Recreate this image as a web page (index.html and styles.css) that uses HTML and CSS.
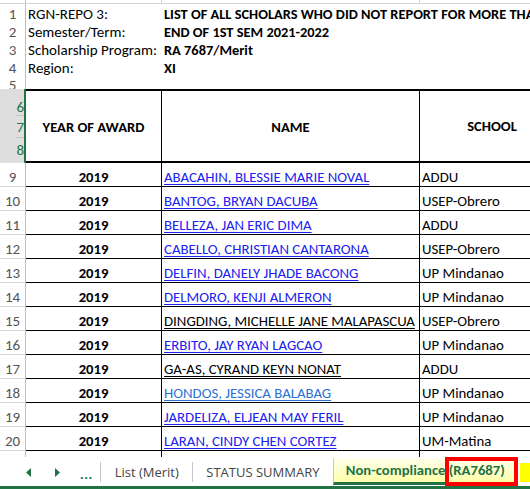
FILE: index.html
```html
<!DOCTYPE html>
<html>
<head>
<meta charset="utf-8">
<title>Non-compliance (RA7687)</title>
<link rel="stylesheet" href="styles.css">
</head>
<body>
<div class="app">
  <div class="sheet">
    <div class="row top">
      <div class="rh"></div><div class="c ca"></div><div class="c cb"></div><div class="c cc"></div>
    </div>
    <div class="row meta">
      <div class="rh">1</div><div class="c ca">RGN-REPO 3:</div><div class="c cb b over">LIST OF ALL SCHOLARS WHO DID NOT REPORT FOR MORE THAN ONE SEMESTER</div>
    </div>
    <div class="row meta">
      <div class="rh">2</div><div class="c ca">Semester/Term:</div><div class="c cb b over">END OF 1ST SEM 2021-2022</div>
    </div>
    <div class="row meta">
      <div class="rh">3</div><div class="c ca">Scholarship Program:</div><div class="c cb b over">RA 7687/Merit</div>
    </div>
    <div class="row meta">
      <div class="rh">4</div><div class="c ca">Region:</div><div class="c cb b over">XI</div>
    </div>
    <div class="row short">
      <div class="rh"><span class="clip">5</span></div><div class="c ca"></div><div class="c cb"></div><div class="c cc"></div>
    </div>
    <div class="row head">
      <div class="rh sel-group">
        <div class="rh-sel s6">6</div>
        <div class="rh-sel s7">7</div>
        <div class="rh-sel s8">8</div>
      </div>
      <div class="c ca hc">YEAR OF AWARD</div>
      <div class="c cb hc">NAME</div>
      <div class="c cc hc">SCHOOL</div>
    </div>
    <div class="row data"><div class="rh">9</div><div class="c ca yr">2019</div><div class="c cb"><span class="lnk">ABACAHIN, BLESSIE MARIE NOVAL</span></div><div class="c cc">ADDU</div></div>
    <div class="row data"><div class="rh">10</div><div class="c ca yr">2019</div><div class="c cb"><span class="lnk">BANTOG, BRYAN DACUBA</span></div><div class="c cc">USEP-Obrero</div></div>
    <div class="row data"><div class="rh">11</div><div class="c ca yr">2019</div><div class="c cb"><span class="lnk">BELLEZA, JAN ERIC DIMA</span></div><div class="c cc">ADDU</div></div>
    <div class="row data"><div class="rh">12</div><div class="c ca yr">2019</div><div class="c cb"><span class="lnk">CABELLO, CHRISTIAN CANTARONA</span></div><div class="c cc">USEP-Obrero</div></div>
    <div class="row data"><div class="rh">13</div><div class="c ca yr">2019</div><div class="c cb"><span class="lnk">DELFIN, DANELY JHADE BACONG</span></div><div class="c cc">UP Mindanao</div></div>
    <div class="row data"><div class="rh">14</div><div class="c ca yr">2019</div><div class="c cb"><span class="lnk">DELMORO, KENJI ALMERON</span></div><div class="c cc">UP Mindanao</div></div>
    <div class="row data"><div class="rh">15</div><div class="c ca yr">2019</div><div class="c cb"><span class="lnk blk">DINGDING, MICHELLE JANE MALAPASCUA</span></div><div class="c cc">USEP-Obrero</div></div>
    <div class="row data"><div class="rh">16</div><div class="c ca yr">2019</div><div class="c cb"><span class="lnk">ERBITO, JAY RYAN LAGCAO</span></div><div class="c cc">UP Mindanao</div></div>
    <div class="row data"><div class="rh">17</div><div class="c ca yr">2019</div><div class="c cb"><span class="lnk blk">GA-AS, CYRAND KEYN NONAT</span></div><div class="c cc">ADDU</div></div>
    <div class="row data"><div class="rh">18</div><div class="c ca yr">2019</div><div class="c cb"><span class="lnk lt">HONDOS, JESSICA BALABAG</span></div><div class="c cc">UP Mindanao</div></div>
    <div class="row data"><div class="rh">19</div><div class="c ca yr">2019</div><div class="c cb"><span class="lnk">JARDELIZA, ELJEAN MAY FERIL</span></div><div class="c cc">UP Mindanao</div></div>
    <div class="row data"><div class="rh">20</div><div class="c ca yr">2019</div><div class="c cb"><span class="lnk">LARAN, CINDY CHEN CORTEZ</span></div><div class="c cc">UM-Matina</div></div>
    <div class="row tail">
      <div class="rh"></div><div class="c ca"></div><div class="c cb"></div><div class="c cc"></div>
    </div>
  </div>
  <div class="tabbar">
    <div class="nav">
      <svg class="arr" width="6" height="9" viewBox="0 0 6 9"><path d="M5 0 L0 4.5 L5 9 Z" fill="#217346"/></svg>
      <svg class="arr r" width="6" height="9" viewBox="0 0 6 9"><path d="M0 0 L5 4.5 L0 9 Z" fill="#217346"/></svg>
      <span class="more">...</span>
    </div>
    <div class="tab first">List (Merit)</div>
    <div class="tab">STATUS SUMMARY</div>
    <div class="tab active">Non-compliance (RA7687)<span class="mark"></span></div>
    <div class="tab yellow"></div>
  </div>
</div>
</body>
</html>
```

FILE: styles.css
```css
* { box-sizing: border-box; }
html, body { margin: 0; padding: 0; }
body {
  width: 530px;
  height: 489px;
  overflow: hidden;
  background: #fff;
  font-family: "Carlito", "Lato", sans-serif;
  font-size: 14.8px;
  color: #000;
}
.app { width: 530px; height: 489px; display: flex; flex-direction: column; overflow: hidden; }
.sheet { display: flex; flex-direction: column; overflow: hidden; }
.row {
  display: grid;
  grid-template-columns: 26px 136px 258px 160px;
  width: 580px;
}
.rh {
  border-right: 1px solid #bfbfbf;
  color: #555;
  font-size: 15px;
  text-align: center;
  display: flex;
  align-items: flex-end;
  justify-content: center;
  line-height: 16px;
  padding-bottom: 1px;
}
.c { display: flex; align-items: flex-end; line-height: 16px; padding-bottom: 1px; white-space: nowrap; }
.b { font-weight: bold; font-size: 14.4px; }
.over { overflow: visible; }

/* top strip */
.top { height: 4px; border-bottom: 1px solid #d4d4d4; }
.top .ca, .top .cb { border-right: 1px solid #d4d4d4; }
.top .rh { padding: 0; }

.meta { height: 18px; }
.meta .c, .meta .rh { line-height: 15px; padding-bottom: 0; }
.meta .c { font-size: 15px; }
.meta .c.b { font-size: 14.4px; }
.meta .ca { padding-left: 2px; }
.meta .cb { padding-left: 2px; }

.short { height: 13px; }
.short .rh { overflow: hidden; align-items: flex-start; padding: 0; }
.short .rh .clip { display: block; line-height: 16px; margin-top: 1px; }

/* header */
.head { height: 74px; }
.sel-group { display: flex; flex-direction: column; padding: 0; border-right: 2px solid #217346; background: #dedede; }
.rh-sel {
  display: flex;
  align-items: center;
  justify-content: center;
  color: #217346;
  border-bottom: 1px solid #c6c6c6;
}
.s6 { height: 27px; padding-top: 9px; }
.s7 { height: 22px; padding-top: 1px; }
.s8 { height: 25px; border-bottom: none; padding-bottom: 2px; }
.hc {
  border-top: 2px solid #000;
  border-bottom: 2px solid #000;
  font-weight: bold;
  font-size: 14.6px;
  justify-content: center;
  align-items: center;
  padding-bottom: 0;
  padding-top: 2px;
}
.head .ca, .head .cb { border-right: 1px solid #000; }
.head .cc { padding-right: 16px; padding-top: 0; }

/* data rows */
.data { height: 24px; }
.data .rh { border-bottom: 1px solid #d4d4d4; padding-bottom: 1px; }
.data .c { border-bottom: 1px solid #000; padding-bottom: 1px; }
.data .ca, .data .cb { border-right: 1px solid #000; }
.data .cb, .data .cc { padding-left: 2px; }
.yr { font-weight: bold; font-size: 14.6px; justify-content: center; }
.lnk { color: #2020f0; text-decoration: underline; text-underline-offset: 2px; }
.lnk.blk { color: #000; }
.lnk.lt { color: #2a72d6; }

.tail { height: 6px; }
.tail .ca, .tail .cb { border-right: 1px solid #000; }
.tail .rh { padding: 0; }

/* tab bar */
.tabbar {
  height: 32px;
  border-bottom: 3px solid #217346;
  display: flex;
  align-items: flex-start;
  font-family: "Open Sans", sans-serif;
  font-size: 13px;
  color: #444;
}
.nav {
  width: 101px;
  height: 20px;
  margin-top: 5px;
  border-right: 1px solid #c6c6c6;
  display: flex;
  align-items: center;
  padding-left: 26px;
}
.arr.r { margin-left: 23px; }
.more { margin-left: 19px; color: #217346; font-weight: bold; letter-spacing: 0.5px; line-height: 10px; margin-top: 4px; }
.tab {
  height: 20px;
  margin-top: 5px;
  display: flex;
  align-items: center;
  white-space: nowrap;
}
.tab.first { width: 93px; padding-left: 14px; border-right: 1px solid #c6c6c6; }
.tab:nth-child(3) { width: 140px; padding-left: 13px; }
.tab.active {
  position: relative;
  width: 182px;
  height: 27px;
  margin-top: 1px;
  padding-left: 12px;
  border-left: 1px solid #c6c6c6;
  border-bottom: 3px solid #217346;
  background: linear-gradient(#ffffee, #ffffa8);
  color: #217346;
  font-family: "Carlito", "Lato", sans-serif;
  font-weight: bold;
  font-size: 14.7px;
}
.mark {
  position: absolute;
  left: 111px;
  top: -1px;
  width: 73px;
  height: 29px;
  border: 4px solid #ff0000;
}
.tab.yellow {
  width: 10px;
  margin-left: 6px;
  height: 19px;
  margin-top: 6px;
  background: #ffff00;
}
```
